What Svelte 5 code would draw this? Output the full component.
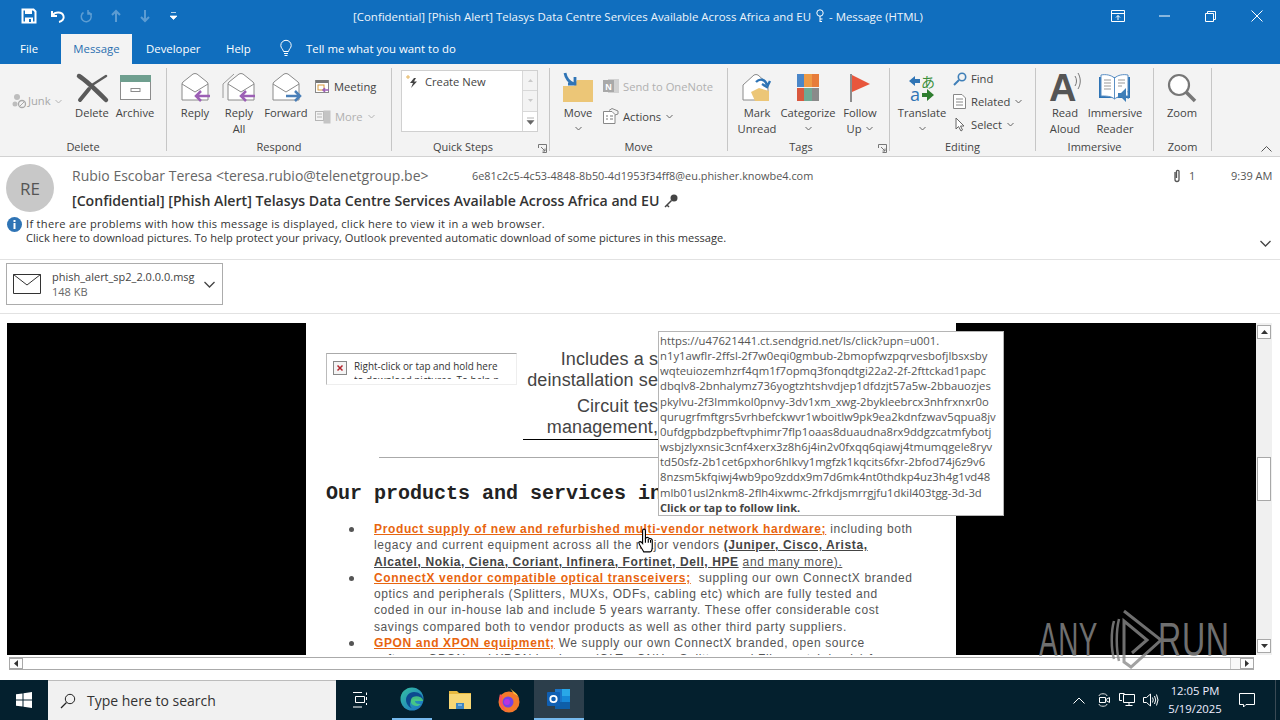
<script>
  const tipLines = [
    'https://u47621441.ct.sendgrid.net/ls/click?upn=u001.',
    'n1y1awflr-2ffsl-2f7w0eqi0gmbub-2bmopfwzpqrvesbofjlbsxsby',
    'wqteuiozemhzrf4qm1f7opmq3fonqdtgi22a2-2f-2fttckad1papc',
    'dbqlv8-2bnhalymz736yogtzhtshvdjep1dfdzjt57a5w-2bbauozjes',
    'pkylvu-2f3lmmkol0pnvy-3dv1xm_xwg-2bykleebrcx3nhfrxnxr0o',
    'qurugrfmftgrs5vrhbefckwvr1wboitlw9pk9ea2kdnfzwav5qpua8jv',
    '0ufdgpbdzpbeftvphimr7flp1oaas8duaudna8rx9ddgzcatmfybotj',
    'wsbjzlyxnsic3cnf4xerx3z8h6j4in2v0fxqq6qiawj4tmumqgele8ryv',
    'td50sfz-2b1cet6pxhor6hlkvy1mgfzk1kqcits6fxr-2bfod74j6z9v6',
    '8nzsm5kfqiwj4wb9po9zddx9m7d6mk4nt0thdkp4uz3h4g1vd48',
    'mlb01usl2nkm8-2flh4ixwmc-2frkdjsmrrgjfu1dkil403tgg-3d-3d'
  ];
</script>

{#snippet chev(c = '#666')}
  <svg class="chev" width="7" height="5" viewBox="0 0 7 5"><path d="M.5 1l3 3 3-3" fill="none" stroke={c}/></svg>
{/snippet}

{#snippet launcher()}
  <svg class="launch" width="9" height="9" viewBox="0 0 9 9"><path d="M.5 4V.5H8.500V8.500H4.500M3 3l4 4M7 4.500V7H4.500" fill="none" stroke="#777"/></svg>
{/snippet}

{#snippet envelope(stroke = '#8a8a8a')}
  <path d="M3 12 Q3 11 4 10 L14 2 Q16 1 18 2 L28 10 Q29 11 29 12 V28 H3 Z" fill="#fff" stroke={stroke}/>
  <path d="M3 12 L16 20 L29 12" fill="none" stroke={stroke}/>
{/snippet}

<div class="app">
  <header class="title">
    <div class="qat">
      <svg width="16" height="16" viewBox="0 0 16 16"><path d="M1.500 1.500H12.500L14.500 3.500V14.500H1.500Z" fill="none" stroke="#fff" stroke-width="2"/><rect x="4" y="2" width="7" height="4" fill="#fff"/><rect x="4" y="9.500" width="8" height="5" fill="#fff"/><rect x="8" y="11" width="2" height="3" fill="#106ebe"/></svg>
      <svg width="16" height="16" viewBox="0 0 16 16"><path d="M2 3V8H7M2.500 7.500C5 3.500 12 3.500 13.500 8C14.500 11 12 13.500 9 14" fill="none" stroke="#fff" stroke-width="2"/></svg>
      <svg class="dim" width="14" height="14" viewBox="0 0 14 14"><path d="M3.500 2.500A5 5 0 1 0 8 2M8 0V4H12" fill="none" stroke="#fff" stroke-width="1.500" transform="translate(0 1)"/></svg>
      <svg class="dim" width="14" height="14" viewBox="0 0 14 14"><path d="M7 13V2M3 6l4-4 4 4" fill="none" stroke="#fff" stroke-width="2"/></svg>
      <svg class="dim" width="14" height="14" viewBox="0 0 14 14"><path d="M7 1V12M3 8l4 4 4-4" fill="none" stroke="#fff" stroke-width="2"/></svg>
      <svg width="9" height="10" viewBox="0 0 9 10"><path d="M2 1.500H7M1 5H8L4.500 8.500Z" fill="#fff" stroke="#fff" stroke-width=".7"/></svg>
    </div>
    <div class="doc-title">[Confidential] [Phish Alert] Telasys Data Centre Services Available Across Africa and EU
      <svg width="10" height="14" viewBox="0 0 10 14"><circle cx="5" cy="4" r="3.200" fill="none" stroke="#fff"/><path d="M5 7V13M5 10H7.500M5 12.500H7" fill="none" stroke="#fff"/></svg>
      - Message (HTML)</div>
    <div class="win">
      <svg width="14" height="12" viewBox="0 0 14 12"><path d="M.5.500H13.500V11.500H.5ZM.5 3.500H13.500M7 10V5.500M5 7.500l2-2 2 2" fill="none" stroke="#fff"/></svg>
      <svg class="w2" width="11" height="2" viewBox="0 0 11 2"><path d="M0 1H11" stroke="#fff"/></svg>
      <svg class="w3" width="11" height="11" viewBox="0 0 11 11"><path d="M.5 2.500H8.500V10.500H.5ZM2.500 2.500V.5H10.500V8.500H8.500" fill="none" stroke="#fff"/></svg>
      <svg class="w4" width="12" height="12" viewBox="0 0 12 12"><path d="M.5.500L11.500 11.500M11.500.500L.5 11.500" stroke="#fff"/></svg>
    </div>
  </header>

  <nav class="tabs">
    <span class="tab file">File</span>
    <span class="tab active">Message</span>
    <span class="tab dev">Developer</span>
    <span class="tab help">Help</span>
    <svg class="bulb" width="12" height="17" viewBox="0 0 12 17"><path d="M3.500 11.500C3 9 .8 8 .8 5.500A5.200 5.200 0 0 1 11.200 5.500C11.200 8 9 9 8.500 11.500ZM4 13.500H8M4.500 15.500H7.500" fill="none" stroke="#fff"/></svg>
    <span class="tab tell">Tell me what you want to do</span>
  </nav>

  <section class="ribbon">
    <div class="grp g-del">
      <div class="grp-body">
        <div class="junk">
          <svg width="15" height="16" viewBox="0 0 15 16"><circle cx="5" cy="4" r="3" fill="#bdbdbd"/><circle cx="3" cy="11" r="2.500" fill="#bdbdbd"/><circle cx="10" cy="11" r="3.500" fill="none" stroke="#a8a8a8" stroke-width="1.300"/><path d="M7.500 13.500L12.500 8.500" stroke="#a8a8a8"/></svg>
          <span>Junk</span>{@render chev('#b5b5b5')}
        </div>
        <div class="big w40">
          <div class="ico"><svg width="31" height="28" viewBox="0 0 31 28"><path d="M2 2C10 7 20 17 29 26" fill="none" stroke="#5a5a5a" stroke-width="4.500" stroke-linecap="round"/><path d="M29 2L15 11" fill="none" stroke="#5a5a5a" stroke-width="2.500" stroke-linecap="round"/><path d="M12 15L3 26" fill="none" stroke="#5a5a5a" stroke-width="4" stroke-linecap="round"/></svg></div>
          <span>Delete</span>
        </div>
        <div class="big w46">
          <div class="ico"><svg width="31" height="25" viewBox="0 0 31 25"><rect x=".5" y="1.500" width="30" height="23" fill="#fff" stroke="#8c8c8c"/><rect y="0" width="31" height="7" fill="#6f9f8f"/><rect x="11" y="13.500" width="9" height="3" fill="none" stroke="#8c8c8c"/></svg></div>
          <span>Archive</span>
        </div>
      </div>
      <div class="grp-label">Delete</div>
    </div>

    <div class="grp g-res">
      <div class="grp-body">
        <div class="big w40">
          <div class="ico"><svg width="32" height="32" viewBox="0 0 32 32">{@render envelope()}<path d="M31 24H17M22 19l-5 5 5 5" fill="none" stroke="#9c5fb5" stroke-width="2.500"/></svg></div>
          <span>Reply</span>
        </div>
        <div class="big w48">
          <div class="ico"><svg width="34" height="32" viewBox="0 0 34 32"><path d="M1 12L12 2M1 12V26" fill="none" stroke="#9a9a9a"/><g transform="translate(3 0)">{@render envelope()}</g><path d="M33 24H19M24 19l-5 5 5 5" fill="none" stroke="#9c5fb5" stroke-width="2.500"/></svg></div>
          <span>Reply<br>All</span>
        </div>
        <div class="big w46">
          <div class="ico"><svg width="32" height="32" viewBox="0 0 32 32">{@render envelope()}<path d="M16 24H30M25 19l5 5-5 5" fill="none" stroke="#4a7fb8" stroke-width="2.500"/></svg></div>
          <span>Forward</span>
        </div>
        <div class="col c30 res-col">
          <div class="small">
            <svg width="15" height="15" viewBox="0 0 15 15"><rect x=".5" y="1.500" width="13" height="12" fill="#fff" stroke="#888"/><rect x="1" y="1" width="12" height="3" fill="#777"/><rect x="3" y="6" width="6" height="5" fill="none" stroke="#d89a3a"/><path d="M14 11H8M10 9l-2 2 2 2" fill="none" stroke="#9c5fb5" stroke-width="1.500"/></svg>
            <span>Meeting</span>
          </div>
          <div class="small off">
            <svg width="16" height="15" viewBox="0 0 16 15"><rect x=".5" y="2.500" width="8" height="9" fill="none" stroke="#b5b5b5"/><rect x="8.500" y="1.500" width="7" height="13" fill="#c4c4c4"/><path d="M2 5H7M2 8H7" stroke="#b5b5b5"/></svg>
            <span>More</span>{@render chev('#b5b5b5')}
          </div>
        </div>
      </div>
      <div class="grp-label">Respond</div>
    </div>

    <div class="grp g-qs">
      <div class="grp-body">
        <div class="gallery">
          <div class="gal-list">
            <svg width="14" height="14" viewBox="0 0 14 14"><path d="M8 3L4 8H7L5 13L11 6.500H8L10 3Z" fill="#444"/><path d="M2 0V4M0 2H4" stroke="#e5b45c"/></svg>
            <span>Create New</span>
          </div>
          <div class="gal-scroll">
            <span><svg width="5" height="3" viewBox="0 0 5 3"><path d="M0 3L2.500 0 5 3Z" fill="#c9c9c9"/></svg></span>
            <span><svg width="5" height="3" viewBox="0 0 5 3"><path d="M0 0L2.500 3 5 0Z" fill="#c9c9c9"/></svg></span>
            <span><svg width="7" height="8" viewBox="0 0 7 8"><path d="M0 1H7M0 3.500H7L3.500 7.500Z" fill="#666" stroke="#666" stroke-width=".5"/></svg></span>
          </div>
        </div>
      </div>
      <div class="grp-label lab-l">Quick Steps{@render launcher()}</div>
    </div>

    <div class="grp g-mov">
      <div class="grp-body">
        <div class="big w40">
          <div class="ico"><svg width="32" height="32" viewBox="0 0 32 32"><path d="M1 14H12L15 8H31V30H1Z" fill="#ecc677"/><path d="M3 1C4 7 7 10 12 12M6 12h7V5" fill="none" stroke="#2f74b5" stroke-width="2.800"/></svg></div>
          <span>Move</span>
          {@render chev()}
        </div>
        <div class="col c30 mov-col">
          <div class="small off">
            <svg width="16" height="16" viewBox="0 0 16 16"><rect x="5" y="1" width="11" height="14" fill="#d2d2d2"/><rect y="2" width="11" height="12" fill="#a9a9a9"/><text x="5.500" y="11.500" class="nglyph">N</text></svg>
            <span>Send to OneNote</span>
          </div>
          <div class="small">
            <svg width="16" height="16" viewBox="0 0 16 16"><path d="M.5 3.500H9L12 6.500V15.500H.5Z" fill="#fff" stroke="#888"/><path d="M3 8H5M7 8H10M3 11H5M7 11H10" stroke="#777"/><path d="M6 2.500L9 .5L15 3V6L12 7" fill="none" stroke="#888"/></svg>
            <span>Actions</span>{@render chev()}
          </div>
        </div>
      </div>
      <div class="grp-label">Move</div>
    </div>

    <div class="grp g-tag">
      <div class="grp-body">
        <div class="big w48">
          <div class="ico"><svg width="32" height="32" viewBox="0 0 32 32"><path d="M2 13L13 3Q15 2 17 3L27 12V28H2Z" fill="#fff" stroke="#8a8a8a"/><path d="M10 20L18 16L28 19V29H14Z" fill="#ecc677"/><path d="M15 10C19 6 24 7 26 13M21 12l5 3 3-6" fill="none" stroke="#2f74b5" stroke-width="2.400"/></svg></div>
          <span>Mark<br>Unread</span>
        </div>
        <div class="big w54">
          <div class="ico"><div class="cats"><i class="c1"></i><i class="c2"></i><i class="c3"></i><i class="c4"></i><i class="c5"></i><i class="c6"></i></div></div>
          <span>Categorize</span>
          {@render chev()}
        </div>
        <div class="big w50">
          <div class="ico"><svg width="22" height="30" viewBox="0 0 22 30"><path d="M2 1V29" stroke="#8c8c8c" stroke-width="2"/><path d="M3 2L21 11L3 19Z" fill="#e8563c"/></svg></div>
          <span>Follow<br>Up {@render chev()}</span>
        </div>
      </div>
      <div class="grp-label lab-l">Tags{@render launcher()}</div>
    </div>

    <div class="grp g-edt">
      <div class="grp-body">
        <div class="big w48">
          <div class="ico"><svg width="28" height="30" viewBox="0 0 28 30">
            <path d="M1 8L7 3V13Z M7 6H12V10H7Z" fill="#2f74b5"/>
            <text x="13" y="14" class="ja">あ</text>
            <text x="2" y="28" class="la">a</text>
            <path d="M26 22L19 28V16Z M19 20H14V24H19Z" fill="#2f7d2f"/>
          </svg></div>
          <span>Translate</span>
          {@render chev()}
        </div>
        <div class="col c23 edt-col">
          <div class="small">
            <svg width="14" height="14" viewBox="0 0 14 14"><circle cx="9" cy="5" r="3.700" fill="none" stroke="#3f7fb8" stroke-width="1.600"/><path d="M6 8L1 13" stroke="#3f7fb8" stroke-width="2"/></svg>
            <span>Find</span>
          </div>
          <div class="small">
            <svg width="14" height="15" viewBox="0 0 14 15"><path d="M.5.500H9L12.500 4V14.500H.5Z" fill="#fff" stroke="#888"/><path d="M3 5H10M3 8H10M3 11H10" stroke="#888"/></svg>
            <span>Related</span>{@render chev()}
          </div>
          <div class="small">
            <svg width="14" height="15" viewBox="0 0 14 15"><path d="M3 1V12L5.500 9.500L8 14L9.500 13L7.500 9H11Z" fill="#fff" stroke="#666"/></svg>
            <span>Select</span>{@render chev()}
          </div>
        </div>
      </div>
      <div class="grp-label">Editing</div>
    </div>

    <div class="grp g-imm">
      <div class="grp-body">
        <div class="big w44">
          <div class="ico"><svg width="32" height="32" viewBox="0 0 32 32"><text x="0" y="29" class="bigA">A</text><path d="M26 4C28 7 28 11 26 14M29 1C32 6 32 12 29 17" fill="none" stroke="#777"/></svg></div>
          <span>Read<br>Aloud</span>
        </div>
        <div class="big w56">
          <div class="ico"><svg width="34" height="30" viewBox="0 0 34 30">
            <path d="M1 4H32V25H1Z" fill="#2f74b5"/>
            <path d="M3 2C8 1 13 2 16.500 5V26C13 23 8 23 3 23ZM30 2C25 1 20 2 16.500 5V26C20 23 25 23 30 23Z" fill="#fff" stroke="#5b8fc4"/>
            <path d="M6 7H13M6 10H13M6 13H13M6 16H13M20 7H27M20 10H27M20 13H24" stroke="#999"/>
            <path d="M20 20H23L28 15V29L23 24H20Z" fill="#3f7fb8"/>
            <path d="M30 18Q32 22 30 26" fill="none" stroke="#3f7fb8"/>
          </svg></div>
          <span>Immersive<br>Reader</span>
        </div>
      </div>
      <div class="grp-label">Immersive</div>
    </div>

    <div class="grp g-zoo">
      <div class="grp-body">
        <div class="big w44">
          <div class="ico"><svg width="30" height="30" viewBox="0 0 30 30"><circle cx="12" cy="12" r="10" fill="#fff" stroke="#777" stroke-width="2.200"/><path d="M19 19L28 28" stroke="#777" stroke-width="3.500"/></svg></div>
          <span>Zoom</span>
        </div>
      </div>
      <div class="grp-label">Zoom</div>
    </div>

    <div class="collapse"><svg width="11" height="6" viewBox="0 0 11 6"><path d="M.5 5.500L5.500.5L10.500 5.500" fill="none" stroke="#555"/></svg></div>
  </section>

  <section class="head">
    <div class="avatar">RE</div>
    <div class="head-main">
      <div class="head-top">
        <span class="sender">Rubio Escobar Teresa &lt;teresa.rubio@telenetgroup.be&gt;</span>
        <span class="msgid">6e81c2c5-4c53-4848-8b50-4d1953f34ff8@eu.phisher.knowbe4.com</span>
        <span class="clip">
          <svg width="10" height="15" viewBox="0 0 10 15"><path d="M3 4V11.500A2 2 0 0 0 7 11.500V3A1.500 1.500 0 0 0 4.500 3V10" fill="none" stroke="#555" stroke-width="1.300"/></svg>
          1
        </span>
        <span class="time">9:39 AM</span>
      </div>
      <div class="subject">[Confidential] [Phish Alert] Telasys Data Centre Services Available Across Africa and EU
        <svg width="16" height="16" viewBox="0 0 16 16"><circle cx="11" cy="5" r="3.500" fill="#444"/><path d="M8.500 7.500L2 14M4 12L6 14" stroke="#444" stroke-width="1.500"/></svg>
      </div>
    </div>
  </section>

  <section class="info">
    <div class="info-1">
      <svg width="15" height="15" viewBox="0 0 15 15"><circle cx="7.500" cy="7.500" r="7.500" fill="#2f74b5"/><rect x="6.500" y="6" width="2" height="6" fill="#fff"/><rect x="6.500" y="3" width="2" height="2" fill="#fff"/></svg>
      <span>If there are problems with how this message is displayed, click here to view it in a web browser.</span>
    </div>
    <div class="info-2">Click here to download pictures. To help protect your privacy, Outlook prevented automatic download of some pictures in this message.</div>
    <svg class="info-chev" width="11" height="7" viewBox="0 0 11 7"><path d="M.5 1L5.500 6L10.500 1" fill="none" stroke="#444" stroke-width="1.300"/></svg>
  </section>

  <section class="attach">
    <div class="card">
      <svg width="28" height="20" viewBox="0 0 28 20"><path d="M.5.500H27.500V19.500H.5ZM.5.500L14 11L27.500.500" fill="none" stroke="#333"/></svg>
      <div class="card-text"><div>phish_alert_sp2_2.0.0.0.msg</div><div class="kb">148 KB</div></div>
      <svg width="11" height="7" viewBox="0 0 11 7"><path d="M.5 1L5.500 6L10.500 1" fill="none" stroke="#444" stroke-width="1.300"/></svg>
    </div>
  </section>

  <section class="viewer">
    <div class="black left"></div>
    <div class="mail">
      <div class="top-row">
        <div class="ph">
          <svg width="14" height="14" viewBox="0 0 14 14"><rect x=".5" y=".5" width="13" height="13" fill="#f4f4f4" stroke="#888"/><path d="M4.500 4.500L9.500 9.500M9.500 4.500L4.500 9.500" stroke="#b3262e" stroke-width="1.500"/></svg>
          <div class="ph-t">Right-click or tap and hold here<br>to download pictures. To help p</div>
        </div>
        <div class="promo">
          <p>Includes a s<br>deinstallation se</p>
          <p class="u">Circuit tes<br>management,</p>
        </div>
      </div>
      <div class="rule"></div>
      <h2>Our products and services in</h2>
      <ul>
        <li><i></i><div><a>Product supply of new and refurbished multi-vendor network hardware;</a> <span class="t">including both</span><br><span class="t">legacy and current equipment across all the major vendors</span> <b>(Juniper, Cisco, Arista,<br>Alcatel, Nokia, Ciena, Coriant, Infinera, Fortinet, Dell, HPE</b> <u class="t">and many more).</u></div></li>
        <li><i></i><div><a>ConnectX vendor compatible optical transceivers;</a> <span class="t">&nbsp;suppling our own ConnectX branded</span><br><span class="t">optics and peripherals (Splitters, MUXs, ODFs, cabling etc) which are fully tested and<br>coded in our in-house lab and include 5 years warranty. These offer considerable cost<br>savings compared both to vendor products as well as other third party suppliers.</span></div></li>
        <li><i></i><div><a>GPON and XPON equipment;</a> <span class="t">We supply our own ConnectX branded, open source<br>software GPON and XPON hardware (OLTs, ONUs, Splitters and Fibre patch leads) from</span></div></li>
      </ul>
    </div>
    <div class="black right"></div>
    <div class="vscroll">
      <span class="sb"><svg width="7" height="4" viewBox="0 0 7 4"><path d="M0 4L3.500 0 7 4Z" fill="#333"/></svg></span>
      <span class="thumb"></span>
      <span class="sb"><svg width="7" height="4" viewBox="0 0 7 4"><path d="M0 0L3.500 4 7 0Z" fill="#333"/></svg></span>
    </div>

    <div class="tip">
      {#each tipLines as line}<div>{line}</div>{/each}
      <div class="tip-b">Click or tap to follow link.</div>
    </div>

    <svg class="hand" width="16" height="25" viewBox="0 0 14 22"><path d="M4 2.500C4 .5 6.500 .5 6.500 2.500V9C8 8 9.500 8 10 9.500C11.500 9 12.500 10 12.500 11V16C12.500 19 11.500 21 10.500 21H5C4 19 1 15 .8 13C.8 11.500 2.500 11.500 4 13.500Z" fill="#fff" stroke="#000"/><path d="M6.500 9V13M9 9.500V13M11 10.500V13" stroke="#000"/></svg>
  </section>

  <section class="hscroll">
    <span class="sb"><svg width="4" height="7" viewBox="0 0 4 7"><path d="M4 0L0 3.500 4 7Z" fill="#333"/></svg></span>
    <span class="hthumb"></span>
    <span class="sb"><svg width="4" height="7" viewBox="0 0 4 7"><path d="M0 0L4 3.500 0 7Z" fill="#333"/></svg></span>
  </section>

  <footer class="taskbar">
    <div class="start"><svg width="16" height="16" viewBox="0 0 16 16"><path d="M0 2.300L6.500 1.400V7.500H0ZM7.500 1.200L16 0V7.500H7.500ZM0 8.500H6.500V14.600L0 13.700ZM7.500 8.500H16V16L7.500 14.800Z" fill="#fff"/></svg></div>
    <div class="search">
      <svg width="16" height="16" viewBox="0 0 16 16"><circle cx="10" cy="6" r="4.700" fill="none" stroke="#222"/><path d="M6.500 9.500L1 15" stroke="#222" stroke-width="1.200"/></svg>
      <span>Type here to search</span>
    </div>
    <div class="tb-ic taskview"><svg width="16" height="16" viewBox="0 0 16 16"><path d="M1 .5H10M3.500 4.500H12.500V10.500H3.500ZM1 15H10M14.500 .5V3M14.500 5V8M14.500 11V13" fill="none" stroke="#fff"/></svg></div>
    <div class="tb-ic run edge"><svg width="24" height="24" viewBox="0 0 24 24"><defs><linearGradient id="eg" x1="0" y1="0" x2="1" y2="1"><stop offset="0" stop-color="#35c1a0"/><stop offset="1" stop-color="#1a6fc9"/></linearGradient></defs><circle cx="12" cy="12" r="11.500" fill="url(#eg)"/><path d="M23 13C23 8 19 5 14 5C9 5 6 9 6 13C6 18 11 22 15 22C10 22 9 17 11 14C13 11 19 11 23 14Z" fill="#0c4a8f"/><path d="M23 13C22 10 17 8 13 10C10 12 10 16 13 18C16 20 19 19 21 17C19 17 15 17 15 14H23Z" fill="#4cd07f" opacity=".85"/></svg></div>
    <div class="tb-ic explorer"><svg width="22" height="20" viewBox="0 0 22 20"><path d="M0 1H8L10 3H22V19H0Z" fill="#e8b93f"/><rect y="4" width="22" height="15" fill="#f8d775"/><path d="M7 19V13H15V19Z" fill="#3f87c4"/><path d="M9 15H13" stroke="#bfe0f5"/></svg></div>
    <div class="tb-ic fox"><svg width="24" height="25" viewBox="0 0 24 25"><circle cx="12" cy="14" r="10.500" fill="#f5792a"/><path d="M13 0C15 3 20 4 22 10C23 14 22 7 17 6Z" fill="#fcbc3c"/><path d="M3 6C1 12 3 20 10 24C5 18 4 12 6 9Z" fill="#ff4f5e"/><circle cx="11" cy="14" r="5.500" fill="#7542e5"/><circle cx="10" cy="14" r="3" fill="#b833e1"/></svg></div>
    <div class="tb-ic run active-app"><svg width="24" height="22" viewBox="0 0 24 22"><rect x="8" y="1" width="15" height="20" fill="#1a74c9"/><rect x="15" y="1" width="8" height="7" fill="#29a8e8"/><rect x="15" y="8" width="8" height="7" fill="#1688d8"/><rect x="8" y="14" width="15" height="7" fill="#0e5ea8"/><rect y="4" width="13" height="14" rx="1" fill="#0f5fb3"/><circle cx="6.500" cy="11" r="3.200" fill="none" stroke="#fff" stroke-width="1.800"/></svg></div>

    <div class="tray">
      <svg width="12" height="7" viewBox="0 0 12 7"><path d="M.5 6.500L6 1L11.500 6.500" fill="none" stroke="#fff"/></svg>
      <svg class="t-meet" width="12" height="16" viewBox="0 0 12 16"><path d="M1 4C1 1 9 1 9 4M1 12C1 15 9 15 9 12" fill="none" stroke="#ddd"/><path d="M1.500 5.500H7.500V10.500H1.500ZM8 7.500L11.500 5.500V10.500L8 8.500" fill="none" stroke="#fff"/></svg>
      <svg class="t-net" width="16" height="14" viewBox="0 0 16 14"><path d="M4.500 1.500H15.500V9.500H4.500ZM10 9.500V12.500M6.500 12.500H13.500M.5.500H5.500M.5.500V7.500H3" fill="none" stroke="#fff"/></svg>
      <svg class="t-snd" width="16" height="14" viewBox="0 0 16 14"><path d="M.5 4.500H3.500L7.500 1V13L3.500 9.500H.5ZM9.500 4.500Q11 7 9.500 9.500M11.500 3Q14 7 11.500 11M13.500 1.500Q16.500 7 13.500 12.500" fill="none" stroke="#fff"/></svg>
    </div>
    <div class="clock"><div>12:05 PM</div><div>5/19/2025</div></div>
    <div class="notif"><svg width="16" height="15" viewBox="0 0 16 15"><path d="M.5.500H15.500V11.500H7L4.500 14V11.500H.5Z" fill="none" stroke="#fff"/></svg></div>
    <div class="desk"></div>
  </footer>

  <div class="mark">
    <span class="m-any">ANY</span>
    <svg width="56" height="62" viewBox="0 0 56 62"><path d="M5 12C2 22 2 40 5 50M10 10C7 22 7 40 10 52" fill="none" stroke="#8b8b8b" stroke-width="2.500"/><path d="M15 2L52 31L22 58L15 53V12L38 31L23 44" fill="none" stroke="#8b8b8b" stroke-width="3"/></svg>
    <span class="m-run">RUN</span>
  </div>
</div>

<style>
  :global(body) { margin: 0; background: #fff; }
  .app { position: relative; width: 1280px; height: 720px; overflow: hidden; font-family: "Open Sans", "Noto Sans", sans-serif; font-size: 12px; color: #444; background: #fff; }
  svg { display: block; flex: none; overflow: visible; }

  .title { height: 32px; background: #106ebe; display: flex; align-items: center; color: #fff; position: relative; }
  .qat { display: grid; grid-template-columns: repeat(6, 29px); align-items: center; justify-items: center; padding-left: 14px; width: 340px; box-sizing: border-box; }
  .dim { opacity: .32; }
  .doc-title { width: 590px; flex: none; display: flex; justify-content: center; align-items: center; gap: 4px; font-size: 11.450px; white-space: nowrap; margin-left: 3px; color: #eef5fb; }
  .win { display: flex; align-items: center; margin-left: 178px; }
  .w2 { margin-left: 34px; }
  .w3 { margin-left: 35px; }
  .w4 { margin-left: 35px; }

  .tabs { height: 32px; background: #106ebe; display: flex; align-items: flex-end; color: #fff; }
  .tab { font-size: 11.400px; height: 30px; line-height: 29px; white-space: nowrap; flex: none; }
  .file { margin-left: 20px; width: 41px; }
  .active { width: 71px; background: #f3f3f3; color: #2a6fb0; text-align: center; }
  .dev { margin-left: 14px; width: 66px; }
  .help { margin-left: 14px; width: 54px; }
  .bulb { margin-bottom: 7px; flex: none; }
  .tell { margin-left: 14px; font-size: 11.400px; }

  .ribbon { height: 92px; background: #f3f3f3; border-bottom: 1px solid #d2d2d2; display: flex; position: relative; box-sizing: content-box; }
  .grp { display: flex; flex-direction: column; flex: none; box-sizing: border-box; position: relative; }
  .grp::after { content: ""; position: absolute; right: 0; top: 4px; bottom: 5px; width: 1px; background: #c6c6c6; }
  .g-del { width: 167px; }
  .g-res { width: 225px; }
  .g-res .grp-body { padding-left: 8px; }
  .g-qs { width: 158px; }
  .g-qs .grp-body { padding-left: 9px; }
  .g-mov { width: 178px; }
  .g-mov .grp-body { padding-left: 8px; }
  .g-tag { width: 162px; }
  .g-tag .grp-body { padding-left: 5px; }
  .g-edt { width: 146px; }
  .g-edt .grp-body { padding-left: 8px; }
  .g-imm { width: 118px; }
  .g-imm .grp-body { padding-left: 7px; }
  .g-zoo { width: 58px; }
  .g-zoo .grp-body { padding-left: 6px; }
  .grp-body { flex: 1; display: flex; min-height: 0; }
  .grp-label { height: 18px; line-height: 18px; text-align: center; font-size: 11px; color: #444; position: relative; padding-right: 1px; }
  .lab-l { padding-right: 16px; }
  .launch { position: absolute; right: 3px; top: 6px; }
  .big { display: flex; flex-direction: column; align-items: center; text-align: center; padding-top: 6px; font-size: 11.200px; line-height: 16px; flex: none; box-sizing: border-box; color: #444; white-space: nowrap; }
  .big .chev { margin-top: 5px; }
  .big span .chev { display: inline-block; margin: 0 0 2px 2px; }
  .ico { height: 35px; display: flex; align-items: center; justify-content: center; }
  .w40 { width: 40px; } .w44 { width: 44px; } .w46 { width: 46px; } .w48 { width: 48px; } .w50 { width: 50px; } .w54 { width: 54px; } .w56 { width: 56px; }
  .junk { width: 72px; flex: none; box-sizing: border-box; padding: 29px 0 0 12px; display: flex; align-items: flex-start; gap: 1px; color: #a8a8a8; font-size: 11.200px; line-height: 16px; }
  .junk .chev { margin: 6px 0 0 3px; }
  .col { display: flex; flex-direction: column; flex: none; }
  .c30 { padding-top: 7px; }
  .c30 .small { height: 30px; }
  .c23 { padding-top: 3px; }
  .c23 .small { height: 23px; }
  .res-col { margin-left: 6px; }
  .mov-col { margin-left: 5px; }
  .edt-col { margin-left: 7px; }
  .small { display: flex; align-items: center; gap: 4px; font-size: 11.200px; white-space: nowrap; color: #444; }
  .small.off { color: #b0b0b0; }
  .small .chev { margin-left: 1px; }
  .nglyph { font: bold 9px "Liberation Sans", sans-serif; fill: #fff; text-anchor: middle; }
  .gallery { margin-top: 6px; width: 137px; height: 62px; display: flex; background: #fff; border: 1px solid #d0d0d0; box-sizing: border-box; }
  .gal-list { flex: 1; display: flex; align-items: flex-start; gap: 5px; padding: 4px 0 0 4px; font-size: 11.200px; line-height: 14px; color: #444; }
  .gal-scroll { width: 14px; display: flex; flex-direction: column; border-left: 1px solid #d8d8d8; background: #f3f3f3; }
  .gal-scroll span { flex: 1; display: flex; align-items: center; justify-content: center; border-bottom: 1px solid #d8d8d8; background: #f3f3f3; }
  .gal-scroll span:last-child { border: 0; background: #fff; }
  .cats { width: 23px; height: 27px; display: grid; grid-template-columns: repeat(3, 1fr); grid-template-rows: 1fr 1fr; row-gap: 1px; }
  .c1 { background: #4a86c8; } .c2 { background: #ee9a45; } .c3 { background: #e77c3a; } .c4 { background: #d9583e; } .c5 { background: #6fa894; } .c6 { background: #8a8a8a; }
  .ja { font: 14px "Noto Sans CJK JP", sans-serif; fill: #3a8f3a; }
  .la { font: 18px "Open Sans", sans-serif; fill: #2f74b5; }
  .bigA { font: bold 38px "Liberation Sans", sans-serif; fill: #555; }
  .collapse { position: absolute; right: 8px; bottom: 4px; }

  .head { height: 59px; display: flex; padding: 7px 0 0 6px; box-sizing: border-box; }
  .avatar { width: 48px; height: 48px; border-radius: 50%; background: #c8c8c8; color: #555; font-size: 17px; display: flex; align-items: center; justify-content: center; flex: none; }
  .head-main { margin-left: 18px; flex: 1; }
  .head-top { display: flex; align-items: center; height: 22px; margin-top: 0; padding-right: 8px; }
  .sender { font-size: 14px; color: #666; white-space: nowrap; width: 400px; flex: none; }
  .msgid { font-size: 10.900px; color: #555; white-space: nowrap; width: 700px; flex: none; }
  .clip { display: flex; align-items: center; gap: 7px; font-size: 11px; width: 59px; flex: none; color: #555; }
  .time { font-size: 11px; white-space: nowrap; color: #555; }
  .subject { display: flex; align-items: center; gap: 4px; margin-top: 5px; font-size: 14.150px; font-weight: 600; color: #333; white-space: nowrap; line-height: 19px; }

  .info { height: 43px; position: relative; border-bottom: 1px solid #e2e2e2; box-sizing: content-box; font-size: 11.100px; color: #333; line-height: 14px; padding-left: 7px; }
  .info-1 { display: flex; align-items: center; gap: 4px; height: 14px; padding-top: 1px; letter-spacing: .29px; }
  .info-2 { padding-left: 19px; }
  .info-chev { position: absolute; right: 9px; top: 24px; }

  .attach { height: 54px; box-sizing: border-box; padding: 3px 0 0 6px; border-bottom: 1px solid #e2e2e2; margin-bottom: 9px; }
  .card { width: 217px; height: 42px; box-sizing: border-box; border: 1px solid #acacac; display: flex; align-items: center; padding-left: 6px; gap: 11px; }
  .card-text { width: 141px; font-size: 11px; line-height: 15px; white-space: nowrap; color: #444; }
  .kb { color: #666; }

  .viewer { height: 332px; display: flex; padding-left: 7px; position: relative; }
  .black { background: #000; flex: none; }
  .left { width: 299px; }
  .right { width: 300px; }
  .mail { width: 650px; flex: none; overflow: hidden; background: #fff; padding-left: 20px; box-sizing: border-box; font-family: "Liberation Sans", sans-serif; }
  .top-row { display: flex; justify-content: space-between; width: 332px; padding-top: 26px; }
  .ph { width: 191px; height: 32px; margin-top: 4px; box-sizing: border-box; border-top: 1px solid #aaa; border-left: 1px solid #bbb; border-right: 1px solid #eee; border-bottom: 1px solid #eee; display: flex; gap: 7px; padding: 5px 0 0 6px; overflow: hidden; font-family: "Open Sans", sans-serif; font-size: 9.900px; line-height: 14px; color: #333; white-space: nowrap; }
  .ph svg { margin-top: 2px; }
  .ph-t { height: 20px; overflow: hidden; }
  .promo { width: 135px; text-align: right; font-size: 18px; letter-spacing: .1px; line-height: 21px; color: #444; white-space: nowrap; display: flex; flex-direction: column; align-items: flex-end; }
  .promo p { margin: 0; }
  .promo .u { margin-top: 5px; width: 135px; border-bottom: 1px solid #000; height: 43px; }
  .rule { margin: 17px 0 0 53px; width: 400px; height: 1px; background: #aaa; }
  h2 { margin: 24px 0 0; font: bold 20px/24px "Liberation Mono", monospace; color: #222; white-space: nowrap; }
  ul { list-style: none; margin: 15px 0 0; padding: 0 0 0 23px; }
  li { display: flex; font-size: 12px; line-height: 16.300px; white-space: nowrap; color: #444; letter-spacing: .6px; }
  li i { width: 5px; height: 5px; border-radius: 50%; background: #555; margin: 6px 20px 0 0; flex: none; }
  a { color: #e8650f; font-weight: bold; text-decoration: underline; letter-spacing: .64px; }
  li b { text-decoration: underline; color: #444; }
  .t { color: #555; }
  .tip { position: absolute; left: 658px; top: 8px; width: 346px; height: 185px; box-sizing: border-box; border: 1px solid #b5b5b5; background: #fff; padding: 1px 0 0 1px; font-size: 11.300px; line-height: 15.150px; color: #555; white-space: nowrap; font-family: "Open Sans", sans-serif; z-index: 2; }
  .tip-b { font-weight: bold; color: #444; font-size: 11px; }
  .hand { position: absolute; left: 638px; top: 205px; z-index: 3; }
  .vscroll { width: 16px; flex: none; background: #f0f0f0; display: flex; flex-direction: column; align-items: center; justify-content: space-between; padding: 2px 0; box-sizing: border-box; position: relative; }
  .sb { width: 14px; height: 14px; box-sizing: border-box; border: 1px solid #a8a8a8; background: #fdfdfd; display: flex; align-items: center; justify-content: center; flex: none; }
  .thumb { position: absolute; left: 1px; top: 134px; width: 14px; height: 44px; background: #fff; border: 1px solid #a8a8a8; box-sizing: border-box; }
  .hscroll { margin: 2px 0 0 9px; width: 1245px; height: 13px; box-sizing: border-box; border-top: 1px solid #aaa; border-bottom: 1px solid #aaa; display: flex; justify-content: space-between; background: #f8f8f8; }
  .hscroll .sb { height: 11px; }
  .hthumb { width: 1207px; background: #fff; border-right: 1px solid #ccc; margin-right: auto; }

  .taskbar { margin-top: 10px; height: 40px; background: #04202e; display: flex; align-items: center; color: #fff; }
  .start { width: 48px; display: flex; justify-content: center; flex: none; }
  .search { width: 288px; height: 40px; box-sizing: border-box; background: #f1f1f1; border-top: 1px solid #bcbcbc; display: flex; align-items: center; padding-left: 12px; gap: 11px; color: #333; font-size: 14px; flex: none; }
  .tb-ic { height: 40px; display: flex; align-items: center; justify-content: center; flex: none; box-sizing: border-box; }
  .taskview { margin-left: 0; width: 48px; }
  .edge { width: 40px; margin-left: 8px; }
  .explorer { width: 48px; margin-left: 4px; }
  .fox { width: 50px; }
  .active-app { width: 50px; margin-left: 0; background: #2c3e4b; }
  .run { border-bottom: 2px solid #76b9ed; }
  .tray { margin-left: 489px; display: flex; align-items: center; gap: 0; flex: none; }
  .t-meet { margin-left: 13px; }
  .t-net { margin-left: 9px; }
  .t-snd { margin-left: 8px; }
  .clock { width: 60px; margin-left: 6px; text-align: center; font-size: 11.300px; line-height: 18px; flex: none; white-space: nowrap; color: #eef; }
  .notif { margin-left: 14px; width: 16px; flex: none; }
  .desk { width: 1px; height: 40px; background: #3a4a55; margin-left: 20px; flex: none; }

  .mark { position: absolute; left: 1039px; top: 609px; display: flex; align-items: center; color: #8b8b8b; font-family: "Liberation Sans", sans-serif; font-size: 48px; opacity: .8; pointer-events: none; z-index: 4; }
  .mark span { display: inline-block; transform-origin: left center; line-height: 62px; }
  .m-any { width: 70px; transform: scaleX(.58); letter-spacing: 1px; }
  .m-run { width: 72px; margin-left: -7px; transform: scaleX(.67); letter-spacing: 1px; }
</style>
